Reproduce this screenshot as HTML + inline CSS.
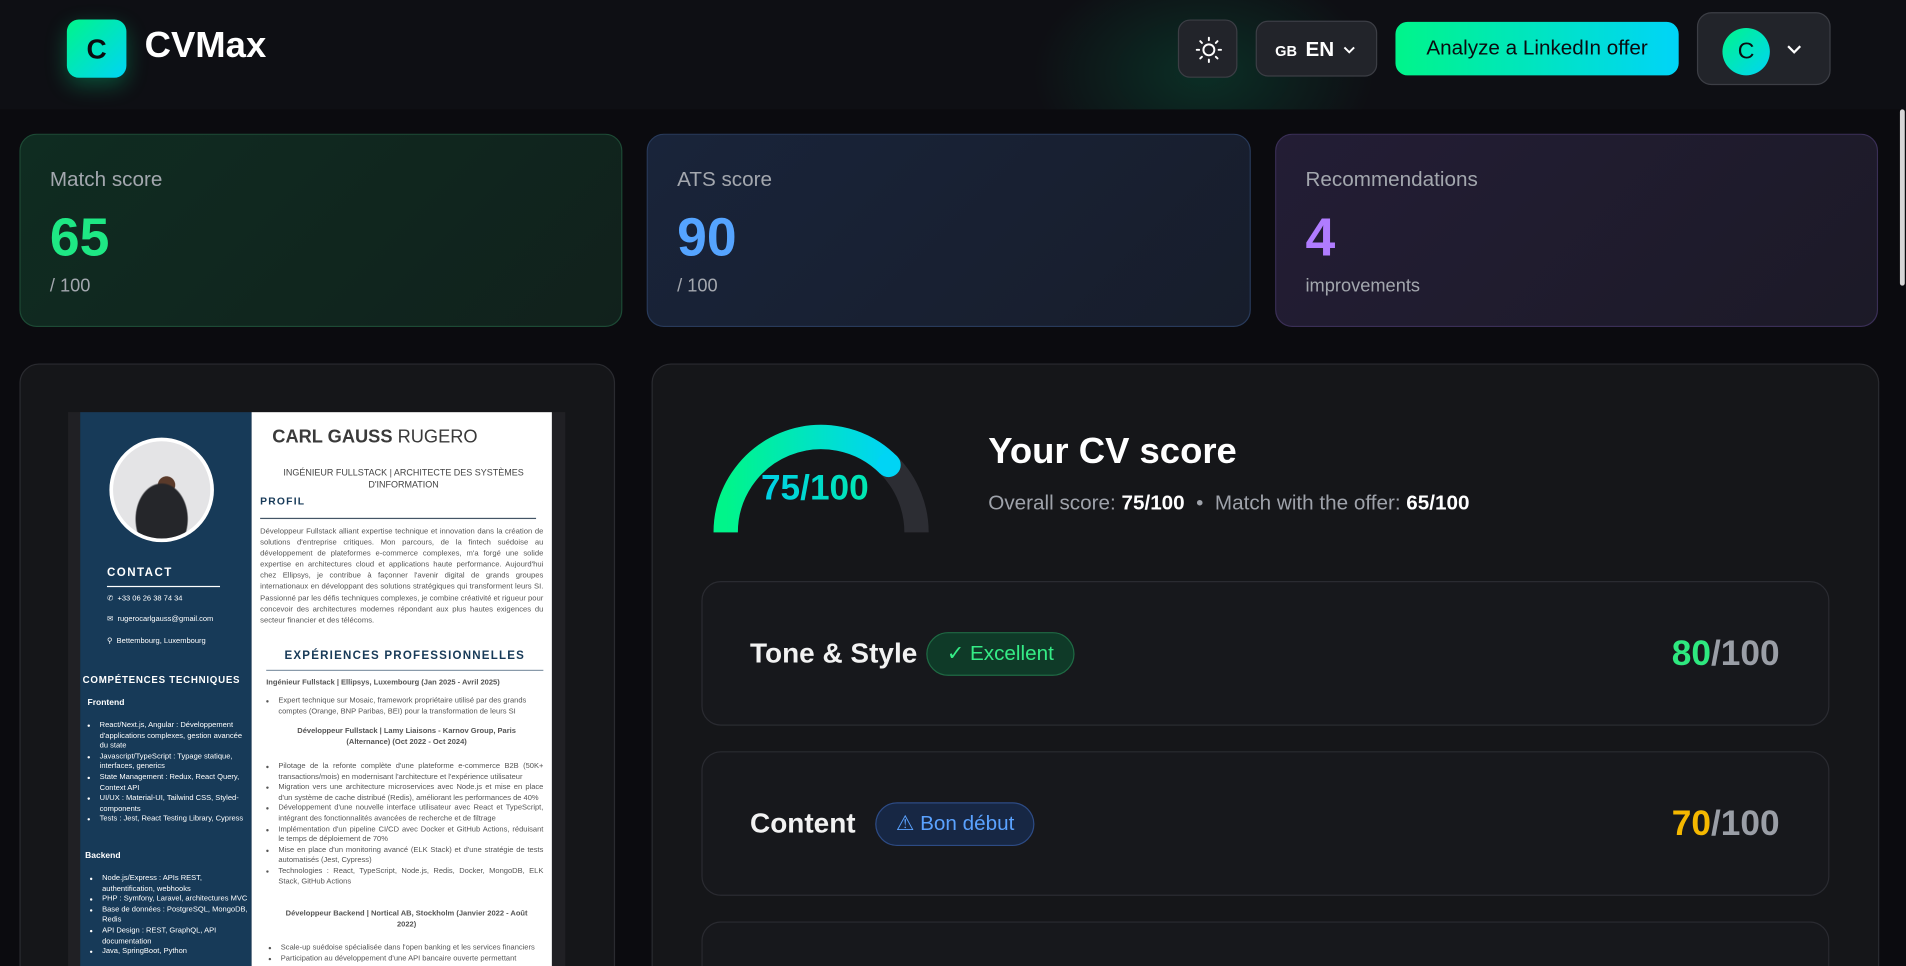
<!DOCTYPE html>
<html><head><meta charset="utf-8"><style>
*{box-sizing:border-box;margin:0;padding:0}
html,body{width:1906px;height:966px;overflow:hidden;background:#0b0b0f;font-family:"Liberation Sans","DejaVu Sans",sans-serif}
#w{position:absolute;left:0;top:0;width:1906px;height:966px;overflow:hidden}
#s{position:absolute;left:0;top:0;width:1568px;height:795px;overflow:hidden;transform:scale(1.21556);transform-origin:0 0;background:#0b0b0f}
.a{position:absolute}
.hdr{left:0;top:0;width:1568px;height:90px;background:radial-gradient(ellipse 140px 90px at 990px 60px,rgba(0,160,100,.22),transparent),#0e0f14}
.btn{position:absolute;background:#22242a;border:1px solid #3c3e45;border-radius:10px;color:#fff}
.card{position:absolute;top:110px;height:159px;border-radius:14px;border:1px solid}
.lbl{position:absolute;left:24px;top:27px;font-size:17px;color:#a3a7ae}
.big{position:absolute;left:24px;top:60px;font-size:44px;font-weight:bold}
.sub{position:absolute;left:24px;top:116px;font-size:15px;color:#a3a7ae}
.panel{position:absolute;top:299px;height:520px;background:#151619;border:1px solid #2a2b30;border-radius:16px}
.sc{position:absolute;left:40px;width:928px;height:119px;background:#17181c;border:1px solid #2a2b31;border-radius:16px}
.sc .t{position:absolute;left:39px;top:45px;font-size:23px;font-weight:bold;color:#f2f2f2}
.sc .b{position:absolute;top:41px;height:36px;border-radius:18px;border:1px solid;font-size:17px;line-height:34px;padding:0 16px}
.sc .n{position:absolute;right:40px;top:43px;font-size:29px;font-weight:bold;color:#9a9ea6}
.cv{font-size:6.2px;line-height:8.6px}
.cv ul{padding-left:10px}
</style></head><body><div id="w"><div id="s">
<div class="a hdr"></div>
<div class="a" style="left:55px;top:16px;width:49px;height:48px;border-radius:10px;background:linear-gradient(135deg,#00f58a,#00d4f5);box-shadow:0 6px 18px rgba(0,230,140,.3);color:#0b0b0f;font-size:23px;font-weight:bold;text-align:center;line-height:48px">C</div>
<div class="a" style="left:119px;top:21px;font-size:30px;font-weight:bold;color:#fff">CVMax</div>
<div class="btn" style="left:969px;top:16px;width:49px;height:48px"><svg width="49" height="48" viewBox="0 0 49 48"><g stroke="#fff" stroke-width="1.6" fill="none" stroke-linecap="round"><circle cx="24.5" cy="24" r="4.5"/><path d="M24.5 14v2M24.5 32v2M14.5 24h2M32.5 24h2M17.4 16.9l1.4 1.4M30.2 29.7l1.4 1.4M17.4 31.1l1.4-1.4M30.2 18.3l1.4-1.4"/></g></svg></div>
<div class="btn" style="left:1033px;top:17px;width:100px;height:46px"><span class="a" style="left:15px;top:17px;font-size:12px;font-weight:bold">GB</span><span class="a" style="left:40px;top:13px;font-size:17px;font-weight:bold">EN</span><svg class="a" style="left:70px;top:17px" width="12" height="12"><path d="M2 4l4 4 4-4" stroke="#fff" stroke-width="1.6" fill="none"/></svg></div>
<div class="a" style="left:1148px;top:18px;width:233px;height:44px;border-radius:10px;background:linear-gradient(90deg,#00f58a,#00d4f8);color:#0b0b0f;font-size:17px;text-align:center;line-height:44px">Analyze a LinkedIn offer</div>
<div class="btn" style="left:1396px;top:10px;width:110px;height:60px;border-radius:12px"><div class="a" style="left:20px;top:12px;width:39px;height:39px;border-radius:50%;background:linear-gradient(135deg,#00f58a,#00d4f5);color:#0b0b0f;font-size:19px;text-align:center;line-height:39px">C</div><svg class="a" style="left:72px;top:24px" width="14" height="12"><path d="M2 3l5 5 5-5" stroke="#fff" stroke-width="1.8" fill="none"/></svg></div>
<div class="a" style="left:1563px;top:90px;width:4px;height:145px;background:#d6d6d6;border-radius:2px"></div>

<div class="card" style="left:16px;width:496px;background:linear-gradient(135deg,#0f2c21,#11211c);border-color:#1d4a35"><div class="lbl">Match score</div><div class="big" style="color:#1ee884">65</div><div class="sub">/ 100</div></div>
<div class="card" style="left:532px;width:497px;background:linear-gradient(135deg,#19243a,#171d2b);border-color:#283a5a"><div class="lbl">ATS score</div><div class="big" style="color:#55a4ff">90</div><div class="sub">/ 100</div></div>
<div class="card" style="left:1049px;width:496px;background:linear-gradient(135deg,#231d35,#1c1a27);border-color:#3a2f56"><div class="lbl">Recommendations</div><div class="big" style="color:#b07cff">4</div><div class="sub">improvements</div></div>

<div class="panel" style="left:16px;width:490px"></div>
<div class="a" style="left:56px;top:339px;width:409px;height:460px;background:#202024;overflow:hidden">
 <div class="a cv" style="left:10px;top:0;width:141px;height:460px;background:#173a58;color:#fff">
  <div class="a" style="left:24px;top:21px;width:86px;height:86px;border-radius:50%;background:radial-gradient(ellipse 22px 30px at 50% 80%,#25262a 0 95%,transparent 100%),radial-gradient(circle at 55% 45%,#5a3a2a 0 11%,transparent 12%),#e4e4e6;border:3px solid #fff"></div>
  <div class="a" style="left:22px;top:129px;font-size:9.5px;font-weight:bold;letter-spacing:1.2px">CONTACT</div>
  <div class="a" style="left:22px;top:143px;width:93px;height:1px;background:#fff"></div>
  <div class="a" style="left:22px;top:150px">✆ &nbsp;+33 06 26 38 74 34</div>
  <div class="a" style="left:22px;top:167px">✉ &nbsp;rugerocarlgauss@gmail.com</div>
  <div class="a" style="left:22px;top:185px">⚲ &nbsp;Bettembourg, Luxembourg</div>
  <div class="a" style="left:2px;top:217px;font-size:8px;font-weight:bold;letter-spacing:.6px">COMPÉTENCES TECHNIQUES</div>
  <div class="a" style="left:6px;top:236px;font-weight:bold;font-size:7px">Frontend</div>
  <ul class="a" style="left:6px;top:254px;width:130px"><li>React/Next.js, Angular : Développement d'applications complexes, gestion avancée du state</li><li>Javascript/TypeScript : Typage statique, interfaces, generics</li><li>State Management : Redux, React Query, Context API</li><li>UI/UX : Material-UI, Tailwind CSS, Styled-components</li><li>Tests : Jest, React Testing Library, Cypress</li></ul>
  <div class="a" style="left:4px;top:362px;font-weight:bold;font-size:7px">Backend</div>
  <ul class="a" style="left:8px;top:380px;width:132px"><li>Node.js/Express : APIs REST, authentification, webhooks</li><li>PHP : Symfony, Laravel, architectures MVC</li><li>Base de données : PostgreSQL, MongoDB, Redis</li><li>API Design : REST, GraphQL, API documentation</li><li>Java, SpringBoot, Python</li></ul>
 </div>
 <div class="a cv" style="left:151px;top:0;width:247px;height:460px;background:#fff;color:#555">
  <div class="a" style="left:17px;top:17px;font-size:15px;color:#3a3a3a;white-space:nowrap"><b>CARL GAUSS</b> RUGERO</div>
  <div class="a" style="left:10px;top:45px;width:230px;text-align:center;font-size:7.4px;line-height:9.5px;color:#444">INGÉNIEUR FULLSTACK | ARCHITECTE DES SYSTÈMES D'INFORMATION</div>
  <div class="a" style="left:7px;top:69px;font-size:8.5px;font-weight:bold;color:#173a58;letter-spacing:1px">PROFIL</div>
  <div class="a" style="left:7px;top:87px;width:227px;height:1px;background:#456"></div>
  <div class="a" style="left:7px;top:94px;width:233px;text-align:justify;font-size:6.3px;line-height:9.1px">Développeur Fullstack alliant expertise technique et innovation dans la création de solutions d'entreprise critiques. Mon parcours, de la fintech suédoise au développement de plateformes e-commerce complexes, m'a forgé une solide expertise en architectures cloud et applications haute performance. Aujourd'hui chez Ellipsys, je contribue à façonner l'avenir digital de grands groupes internationaux en développant des solutions stratégiques qui transforment leurs SI. Passionné par les défis techniques complexes, je combine créativité et rigueur pour concevoir des architectures modernes répondant aux plus hautes exigences du secteur financier et des télécoms.</div>
  <div class="a" style="left:27px;top:197px;font-size:9.5px;font-weight:bold;color:#173a58;letter-spacing:1px;white-space:nowrap">EXPÉRIENCES PROFESSIONNELLES</div>
  <div class="a" style="left:12px;top:212px;width:228px;height:1px;background:#89a"></div>
  <div class="a" style="left:12px;top:219px;font-weight:bold;white-space:nowrap">Ingénieur Fullstack | Ellipsys, Luxembourg (Jan 2025 - Avril 2025)</div>
  <ul class="a" style="left:12px;top:234px;width:228px"><li>Expert technique sur Mosaic, framework propriétaire utilisé par des grands comptes (Orange, BNP Paribas, BEI) pour la transformation de leurs SI</li></ul>
  <div class="a" style="left:20px;top:259px;width:215px;text-align:center;font-weight:bold">Développeur Fullstack | Lamy Liaisons - Karnov Group, Paris (Alternance) (Oct 2022 - Oct 2024)</div>
  <ul class="a" style="left:12px;top:288px;width:228px;text-align:justify"><li>Pilotage de la refonte complète d'une plateforme e-commerce B2B (50K+ transactions/mois) en modernisant l'architecture et l'expérience utilisateur</li><li>Migration vers une architecture microservices avec Node.js et mise en place d'un système de cache distribué (Redis), améliorant les performances de 40%</li><li>Développement d'une nouvelle interface utilisateur avec React et TypeScript, intégrant des fonctionnalités avancées de recherche et de filtrage</li><li>Implémentation d'un pipeline CI/CD avec Docker et GitHub Actions, réduisant le temps de déploiement de 70%</li><li>Mise en place d'un monitoring avancé (ELK Stack) et d'une stratégie de tests automatisés (Jest, Cypress)</li><li>Technologies : React, TypeScript, Node.js, Redis, Docker, MongoDB, ELK Stack, GitHub Actions</li></ul>
  <div class="a" style="left:20px;top:409px;width:215px;text-align:center;font-weight:bold">Développeur Backend | Nortical AB, Stockholm (Janvier 2022 - Août 2022)</div>
  <ul class="a" style="left:14px;top:437px;width:226px"><li>Scale-up suédoise spécialisée dans l'open banking et les services financiers</li><li>Participation au développement d'une API bancaire ouverte permettant</li></ul>
 </div>
</div>

<div class="panel" style="left:536px;width:1010px">
 <svg class="a" style="left:40px;top:40px" width="200" height="110" viewBox="576 339 200 110"><defs><linearGradient id="g" x1="0" x2="1"><stop offset="0" stop-color="#00f58a"/><stop offset="1" stop-color="#00d4f5"/></linearGradient></defs><path d="M596 437A78.5 78.5 0 0 1 753 437" stroke="#2c2d33" stroke-width="20" fill="none"/><path d="M596 437A78.5 78.5 0 0 1 730 381.5" stroke="url(#g)" stroke-width="20" fill="none"/><circle cx="730" cy="381.5" r="10" fill="#00d4f5"/></svg>
 <div class="a" style="left:89px;top:86px;font-size:29px;font-weight:bold;background:linear-gradient(90deg,#00cfe8,#00e8b0);-webkit-background-clip:text;color:transparent">75/100</div>
 <div class="a" style="left:276px;top:55px;font-size:30px;font-weight:bold;color:#fff">Your CV score</div>
 <div class="a" style="left:276px;top:104px;font-size:17px;color:#9ea2aa;white-space:nowrap">Overall score: <b style="color:#fff">75/100</b> &nbsp;•&nbsp; Match with the offer: <b style="color:#fff">65/100</b></div>
 <div class="sc" style="top:178px"><div class="t">Tone &amp; Style</div><div class="b" style="left:184px;background:#0f3a28;border-color:#1f6a44;color:#35ec86">✓ Excellent</div><div class="n"><span style="color:#2ee87f">80</span>/100</div></div>
 <div class="sc" style="top:318px"><div class="t">Content</div><div class="b" style="left:142px;background:#172744;border-color:#2d4b85;color:#5aa2ff">⚠ Bon début</div><div class="n"><span style="color:#f5b800">70</span>/100</div></div>
 <div class="sc" style="top:458px;height:60px;border-bottom:none;border-radius:16px 16px 0 0"></div>
</div>
</div></div></body></html>
